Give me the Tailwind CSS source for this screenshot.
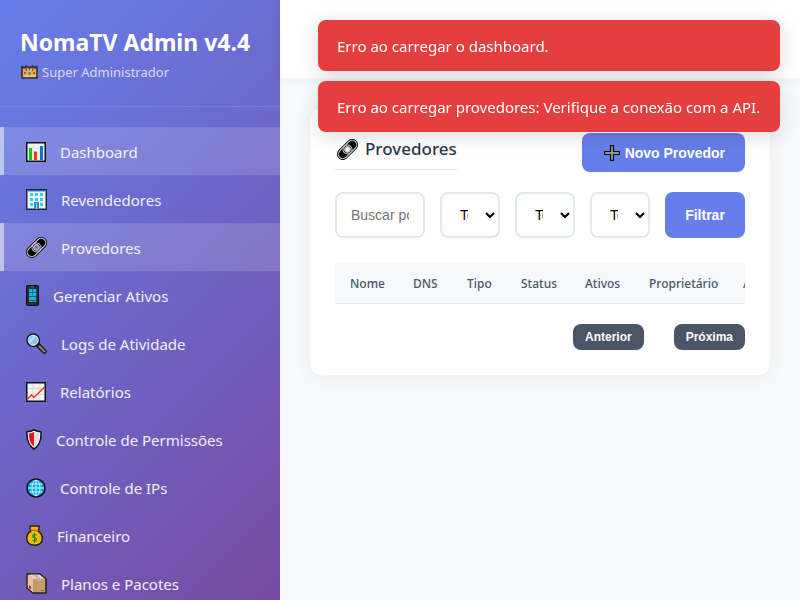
<!DOCTYPE html>
<html lang="pt-BR">
<head>
<meta charset="UTF-8">
<meta name="viewport" content="width=device-width, initial-scale=1">
<title>NomaTV Admin v4.4</title>
<script src="https://cdn.jsdelivr.net/npm/@tailwindcss/browser@4"></script>
</head>
<body class="flex h-screen overflow-hidden bg-[#f8fafc] font-['Segoe_UI','Noto_Sans',sans-serif] text-[#2d3748]">

<svg class="hidden" aria-hidden="true">
  <symbol id="link" viewBox="0 0 21 21">
    <g transform="rotate(-45 10.5 10.5)" fill="none">
      <rect x="-2" y="4.600" width="25" height="11.800" rx="5.900" fill="#000"/>
      <rect x="-.7" y="6" width="15.600" height="9" rx="4.500" stroke="#c4c4c4" stroke-width="1.200"/>
      <rect x="6.100" y="6" width="15.600" height="9" rx="4.500" stroke="#c4c4c4" stroke-width="1.200"/>
      <circle cx="10.500" cy="10.500" r="2.700" fill="currentColor" stroke="#c4c4c4" stroke-width="1.100"/>
    </g>
  </symbol>
</svg>

<aside class="w-[280px] shrink-0 overflow-hidden bg-[linear-gradient(135deg,#667eea_0%,#764ba2_100%)] text-white">
  <div class="border-b border-white/10 px-5 pt-[27px] pb-6">
    <h1 class="text-[23px] leading-[30px] font-bold whitespace-nowrap">NomaTV Admin v4.4</h1>
    <p class="mt-[5px] flex items-center gap-1 text-[13px] leading-5 text-white/75">
      <svg class="ml-px h-3.5 w-[17px]" viewBox="0 0 17 14" aria-hidden="true">
        <path d="M1 1.500l2.500 1.500L5 1l3.500 2L12 1l1.500 2L16 1.500V13H1z" fill="#e3b04f" stroke="#29283a" stroke-width="1.500" stroke-linejoin="round"/>
        <path d="M2 11h13" stroke="#f6cb70"/>
        <path d="M5.200 2v4M8.500 3v2M11.800 2v4" stroke="#4c3c38"/>
        <rect x="3" y="7" width="2" height="2" fill="#c43c78"/><rect x="7.500" y="7" width="2" height="3" fill="#2aa0a8"/><rect x="12" y="7" width="2" height="2" fill="#c43c78"/>
      </svg>
      Super Administrador
    </p>
  </div>
  <nav class="pt-5 text-[15px] leading-6 text-white/90" aria-label="Menu principal">
    <a href="#dashboard" class="flex h-12 items-center gap-3.5 border-l-4 border-white/50 bg-white/15 pt-px pl-[22px]">
      <svg class="h-5 w-5" viewBox="0 0 20 20" aria-hidden="true"><rect x=".75" y=".75" width="18.500" height="18.500" fill="#f4f4f4" stroke="#111" stroke-width="1.500"/><path d="M2 6h16M2 11h16M7 2v16M13 2v16" stroke="#ddd" stroke-width=".6"/><path d="M3 6h3v12H3z" fill="#16c60c"/><path d="M8 9.500h3V18H8z" fill="#f03a17"/><path d="M14 4h3v14h-3z" fill="#0078d7"/></svg>
      Dashboard</a>
    <a href="#revendedores" class="flex h-12 items-center gap-3.5 border-l-4 border-transparent pt-px pl-[22px]">
      <svg class="h-[21px] w-[21px]" viewBox="0 0 21 21" aria-hidden="true"><rect x=".75" y=".75" width="19.500" height="19.500" fill="#f4f4f4" stroke="#222438" stroke-width="1.500"/><path d="M2 1.800h17" stroke="#0063b1" stroke-width="1.200"/><path d="M4 4h3v3H4zM9 4h3v3H9zM14 4h3v3h-3zM4 9h3v3H4zM9 9h3v3H9zM14 9h3v3h-3zM4 14h3v3H4zM14 14h3v3h-3z" fill="#31d2f7"/><path d="M8 13h5v7H8z" fill="#2390dc"/><path d="M10.500 14v6" stroke="#72e6ff"/></svg>
      Revendedores</a>
    <a href="#provedores" aria-current="page" class="flex h-12 items-center gap-3.5 border-l-4 border-white/50 bg-white/15 pt-px pl-[22px]">
      <svg class="h-[21px] w-[21px] text-[#7c7bd4]" aria-hidden="true"><use href="#link"/></svg>
      Provedores</a>
    <a href="#ativos" class="flex h-12 items-center gap-3.5 border-l-4 border-transparent pt-px pl-[22px]">
      <svg class="h-[21px] w-[13px]" viewBox="0 0 13 21" aria-hidden="true"><rect x=".5" y=".5" width="12" height="20" rx="1" fill="#2b2b2b" stroke="#111"/><path d="M3 4h3.600v3.300H3zM7 4h3.300v3.300H7zM3 7.800h3.600v3.300H3zM7 7.800h3.300v3.300H7zM3 11.700h7.300v3.300H3zM3 15.600h3.600v1.400H3zM7 15.600h3.300v1.400H7z" fill="#00b8f0"/><path d="M5 2h3" stroke="#777" stroke-width=".7"/></svg>
      Gerenciar Ativos</a>
    <a href="#logs" class="flex h-12 items-center gap-3.5 border-l-4 border-transparent pt-px pl-[22px]">
      <svg class="h-[21px] w-[21px]" viewBox="0 0 21 21" aria-hidden="true"><path d="M12 12l6.500 6.500" stroke="#151515" stroke-width="4.600" stroke-linecap="round"/><path d="M13.500 13.500l5 5" stroke="#858585" stroke-width="2.200" stroke-linecap="round"/><circle cx="7.200" cy="7.200" r="6.200" fill="#88c7f5" stroke="#111" stroke-width="1.500"/><circle cx="7.200" cy="7.200" r="5" fill="none" stroke="#d8e6ef"/><path d="M4 9l5-6" stroke="#b7e0ff" stroke-width="2"/></svg>
      Logs de Atividade</a>
    <a href="#relatorios" class="flex h-12 items-center gap-3.5 border-l-4 border-transparent pt-px pl-[22px]">
      <svg class="h-5 w-5" viewBox="0 0 20 20" aria-hidden="true"><rect x=".75" y=".75" width="18.500" height="18.500" fill="#f4f4f4" stroke="#111" stroke-width="1.500"/><path d="M2 6.500h16M2 12.500h16M7 2v16M13 2v16" stroke="#d2d2d2" stroke-width=".8"/><path d="M1.500 17l4-4 2.500 2.500L18.500 5" fill="none" stroke="#f03a17" stroke-width="1.500"/></svg>
      Relatórios</a>
    <a href="#permissoes" class="flex h-12 items-center gap-3.5 border-l-4 border-transparent pt-px pl-[22px]">
      <svg class="h-[21px] w-4" viewBox="0 0 16 21" aria-hidden="true"><path d="M8 .8C6 2 3.500 2.700 1 2.800c-.5 8 1 13.500 7 17.200 6-3.700 7.500-9.200 7-17.200C12.500 2.700 10 2 8 .8z" fill="#f2f2f2" stroke="#111" stroke-width="1.500" stroke-linejoin="round"/><path d="M8 3C6.500 3.800 4.700 4.300 3 4.500c-.1 6 1.200 10 5 13z" fill="#e81224"/><path d="M8 3c1.500.8 3.300 1.300 5 1.500.1 6-1.200 10-5 13z" fill="#ddd"/></svg>
      Controle de Permissões</a>
    <a href="#ips" class="flex h-12 items-center gap-3.5 border-l-4 border-transparent pt-px pl-[22px]">
      <svg class="h-5 w-5" viewBox="0 0 20 20" aria-hidden="true"><circle cx="10" cy="10" r="9" fill="#00a9e5" stroke="#111" stroke-width="1.600"/><g fill="none" stroke="#d8f5ff"><ellipse cx="10" cy="10" rx="4" ry="7.800"/><path d="M10 2v16M2 10h16M3.500 6h13M3.500 14h13"/></g></svg>
      Controle de IPs</a>
    <a href="#financeiro" class="flex h-12 items-center gap-3.5 border-l-4 border-transparent pt-px pl-[22px]">
      <svg class="h-[21px] w-[17px]" viewBox="0 0 17 21" aria-hidden="true"><path d="M4 1h9v3l-1 2c3 1.500 4.200 4.500 4.200 7.500 0 4.500-3 6.700-7.700 6.700S.8 18 .8 13.500C.8 10.500 2 7.500 5 6L4 4z" fill="#ffb900" stroke="#222" stroke-width="1.500" stroke-linejoin="round"/><path d="M4.500 5.300h8" stroke="#b67535" stroke-width="1.500"/><path d="M10.500 10.300C9.800 9.200 6.600 9.200 6.600 11s3.900 1.500 3.900 3.500-3 2-4 .7M8.500 7.800v9.700" fill="none" stroke="#109510" stroke-width="1.200"/></svg>
      Financeiro</a>
    <a href="#planos" class="flex h-12 items-center gap-3.5 border-l-4 border-transparent pt-px pl-[22px]">
      <svg class="h-[21px] w-[21px]" viewBox="0 0 21 21" aria-hidden="true"><path d="M1 1h13l6 5v14H7l-6-5z" fill="#c69c6d" stroke="#222" stroke-width="1.500" stroke-linejoin="round"/><path d="M1.800 2L7 6.500v12.800l-5.200-4.600z" fill="#e5c3a5"/><path d="M2.500 1.800h11.200l5 4.200H7z" fill="#eed5bd"/><path d="M7 1.800h3l5 4.200v2h-3V6z" fill="#b5b5b5"/><path d="M3 12l2 1.500v3L3 15z" fill="#e81224"/><path d="M15 17.500h3" stroke="#776252"/></svg>
      Planos e Pacotes</a>
  </nav>
</aside>

<div class="min-w-0 flex-1">
  <header class="h-[78px] bg-white shadow-[0_2px_10px_rgba(0,0,0,0.05)]"></header>
  <main class="p-[30px]">
    <section class="rounded-xl bg-white p-[25px] shadow-[0_4px_20px_rgba(0,0,0,0.05)]">
      <div class="flex items-start justify-between">
        <h2 class="flex items-center gap-[7px] border-b border-[#e2e8f0] pt-0.5 pb-1.5 text-[17px] leading-7 font-medium">
          <svg class="ml-0.5 h-[21px] w-[21px] text-white" aria-hidden="true"><use href="#link"/></svg>
          Provedores</h2>
        <button type="button" class="flex h-[39px] items-center gap-[5px] rounded-lg bg-[#667eea] px-5 font-['Liberation_Sans',sans-serif] text-sm font-bold text-white">
          <svg class="ml-0.5 h-4 w-4" viewBox="0 0 16 16" aria-hidden="true"><path d="M6.500.6h3v5.900h5.900v3H9.500v5.900h-3V9.500H.6v-3h5.900z" fill="#999" stroke="#111" stroke-width="1.200"/></svg>
          Novo Provedor</button>
      </div>
      <form class="mt-5 grid grid-cols-[3fr_2fr_2fr_2fr_80px] gap-[15px] font-['Liberation_Sans',sans-serif] text-sm">
        <input type="text" aria-label="Buscar provedor" placeholder="Buscar por nome" class="h-[46px] w-full min-w-0 rounded-lg border-2 border-[#e2e8f0] bg-white px-3.5 placeholder:text-[#757575]">
        <select aria-label="Tipo" class="h-[46px] w-full min-w-0 rounded-lg border-2 border-[#e2e8f0] bg-white px-3.5 text-black"><option>Todos os tipos</option></select>
        <select aria-label="Status" class="h-[46px] w-full min-w-0 rounded-lg border-2 border-[#e2e8f0] bg-white px-3.5 text-black"><option>Todos os status</option></select>
        <select aria-label="Proprietário" class="h-[46px] w-full min-w-0 rounded-lg border-2 border-[#e2e8f0] bg-white px-3.5 text-black"><option>Todos</option></select>
        <button type="button" class="h-[46px] rounded-lg bg-[#667eea] font-bold text-white">Filtrar</button>
      </form>
      <div class="mt-[25px] overflow-x-hidden">
        <table class="w-[467px] table-fixed text-left text-xs text-[#4a5568]">
          <thead class="border-b border-[#e2e8f0] bg-[#f7fafc]">
            <tr class="h-10">
              <th class="w-[63px] pt-0.5 pl-[15px] font-medium">Nome</th>
              <th class="w-[54px] pt-0.5 pl-[15px] font-medium">DNS</th>
              <th class="w-[54px] pt-0.5 pl-[15px] font-medium">Tipo</th>
              <th class="w-[64px] pt-0.5 pl-[15px] font-medium">Status</th>
              <th class="w-[64px] pt-0.5 pl-[15px] font-medium">Ativos</th>
              <th class="w-[94px] pt-0.5 pl-[15px] font-medium">Proprietário</th>
              <th class="pt-0.5 pl-[15px] font-medium">Ações</th>
            </tr>
          </thead>
          <tbody></tbody>
        </table>
      </div>
      <div class="mt-5 flex justify-end gap-[30px] font-['Liberation_Sans',sans-serif] text-xs font-bold text-white">
        <button type="button" class="h-[26px] rounded-lg bg-[#4a5568] px-3">Anterior</button>
        <button type="button" class="h-[26px] rounded-lg bg-[#4a5568] px-3">Próxima</button>
      </div>
    </section>
  </main>
</div>

<div class="fixed top-5 right-5 flex flex-col gap-2.5 text-[15px] leading-[21px] text-white" role="alert">
  <div class="min-w-[462px] rounded-lg bg-[#e53e3e] px-[19px] pt-4 pb-3.5 shadow-[0_4px_20px_rgba(0,0,0,0.15)]">Erro ao carregar o dashboard.</div>
  <div class="min-w-[462px] rounded-lg bg-[#e53e3e] px-[19px] pt-4 pb-3.5 shadow-[0_4px_20px_rgba(0,0,0,0.15)]">Erro ao carregar provedores: Verifique a conexão com a API.</div>
</div>
</body>
</html>
